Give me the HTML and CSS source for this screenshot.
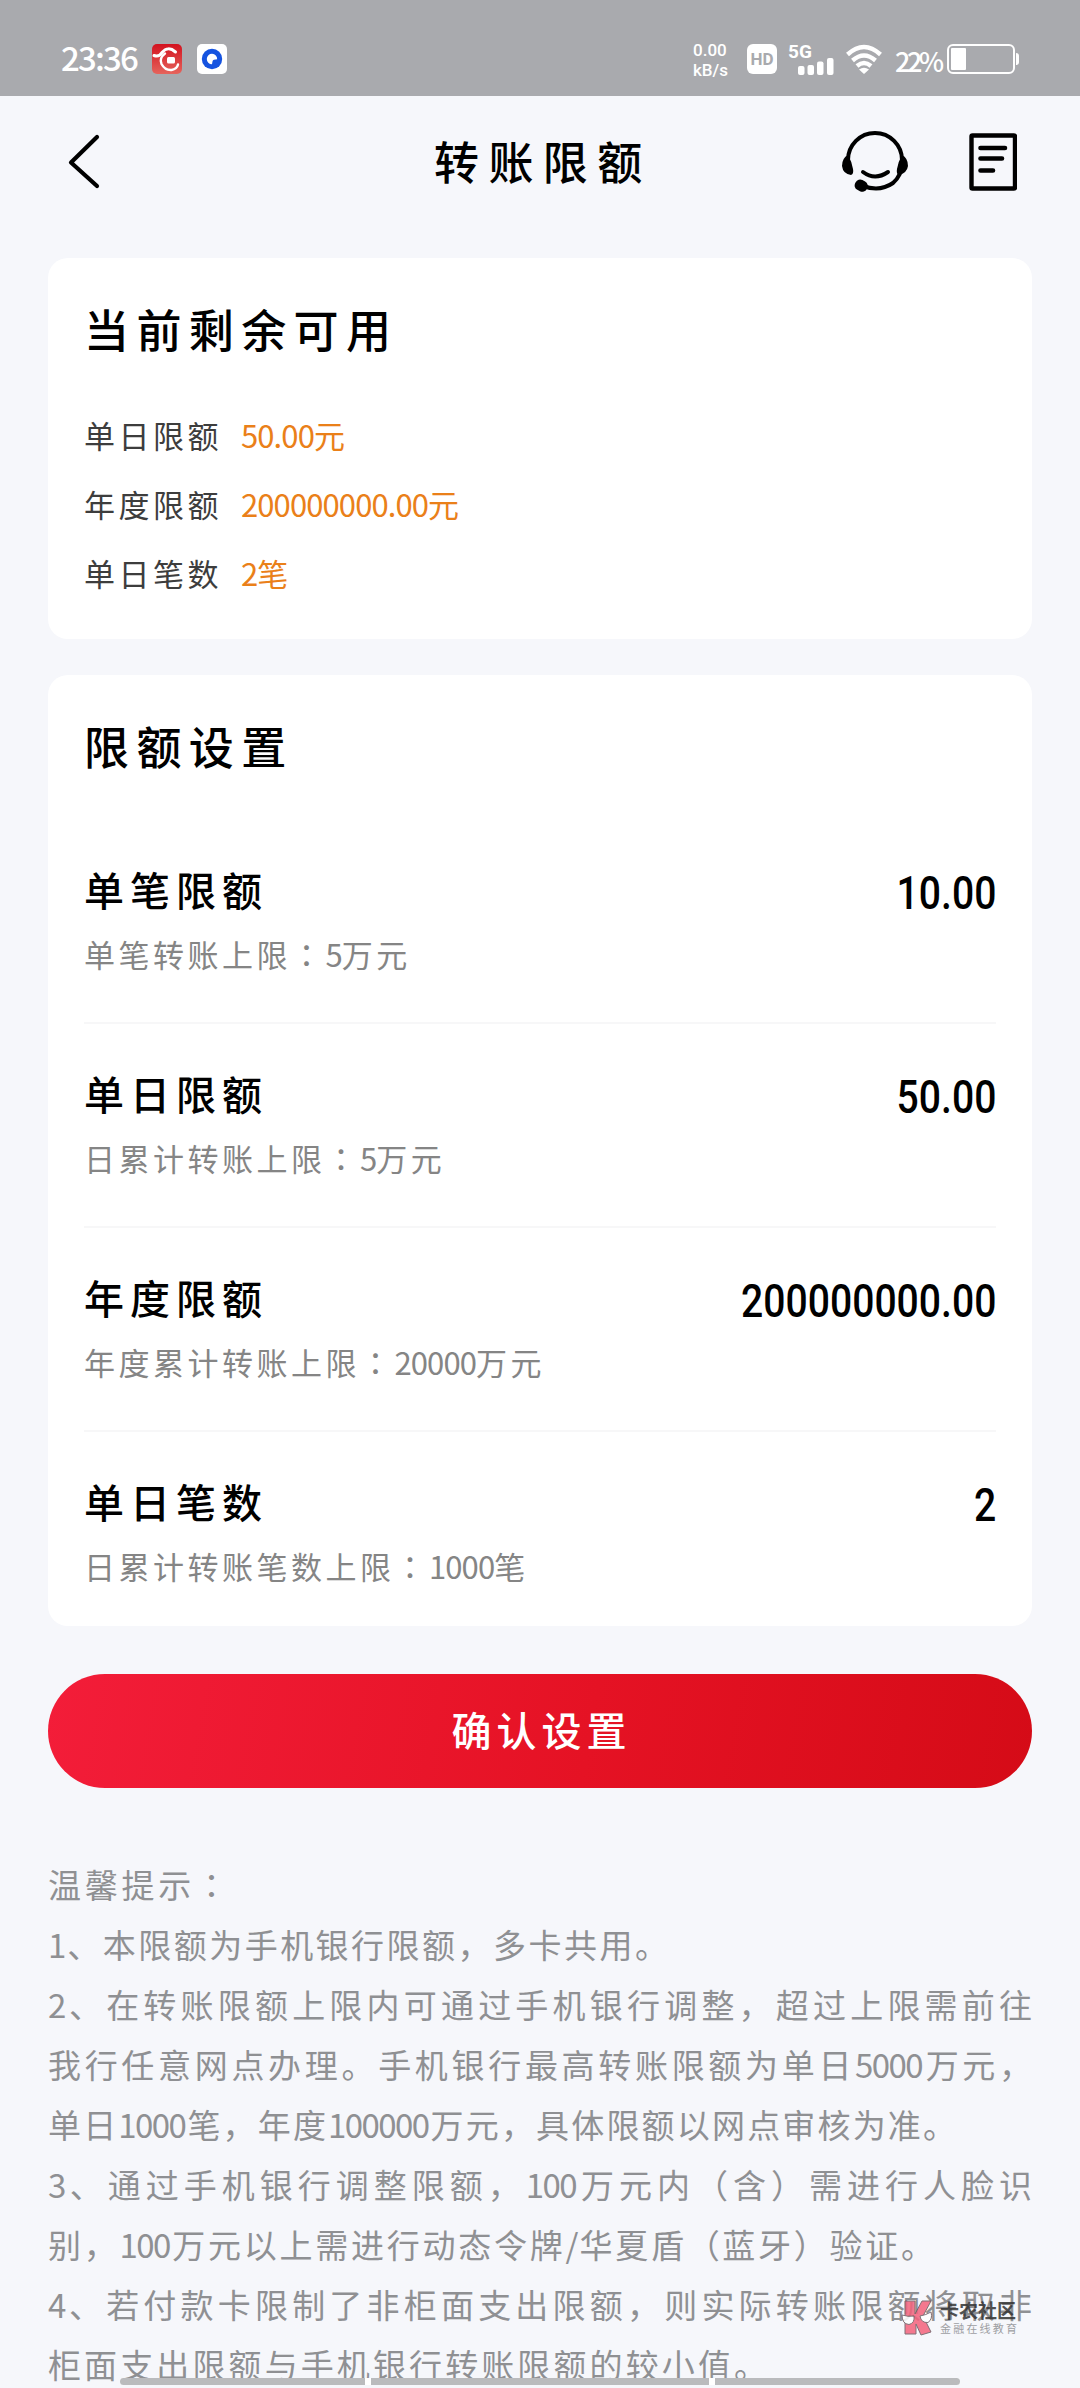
FILE: index.html
```html
<!DOCTYPE html>
<html lang="zh-CN">
<head>
<meta charset="utf-8">
<title>转账限额</title>
<link rel="stylesheet" href="styles.css">
</head>
<body>
<div class="screen">
  <div class="status">
    <span class="time">23:36</span>
    <svg class="app" viewBox="0 0 30 30">
      <defs><linearGradient id="appRed" x1="0" y1="0" x2="0" y2="1"><stop offset="0" stop-color="#d3121f"/><stop offset="1" stop-color="#e5645c"/></linearGradient></defs>
      <rect width="30" height="30" rx="5" fill="url(#appRed)"/>
      <path d="M2 11.500Q7 13.500 10 8.500Q16 1.500 23.500 8" fill="none" stroke="#fff" stroke-width="3" stroke-linecap="round"/>
      <path d="M13 9.500Q7 14 9.500 20Q13 26.500 19.500 26Q25 25 26 20.500" fill="none" stroke="#fff" stroke-width="2.400" stroke-linecap="round"/>
      <rect x="15" y="13" width="8" height="6.500" rx="1.500" fill="#fff"/>
    </svg>
    <svg class="app" viewBox="0 0 30 30">
      <rect width="30" height="30" rx="5" fill="#fff"/>
      <circle cx="15" cy="15" r="10.2" fill="#1553e0"/>
      <path d="M15 20.2A5.2 5.2 0 1 1 20.2 15.2Q16 15.2 15.6 17Z" fill="#fff"/>
    </svg>
    <div class="net"><span>0.00</span><span>kB/s</span></div>
    <div class="hd">HD</div>
    <div class="cell">
      <span>5G</span>
      <svg viewBox="0 0 36 17"><g fill="#fff"><rect x="0" y="8" width="6.5" height="9" rx="2"/><rect x="9.5" y="7" width="6.5" height="10" rx="2"/><rect x="19" y="3.5" width="6.5" height="13.5" rx="2"/><rect x="29" y="0" width="6.5" height="17" rx="2"/></g></svg>
    </div>
    <svg class="wifi" viewBox="0 0 36 30"><g fill="none" stroke="#fff" stroke-width="4.4"><path d="M1.5 10.5Q18-4.500 34.500 10.500"/><path d="M6.500 16.500Q18 6.500 29.500 16.500"/><path d="M11 22Q18 16 25 22"/></g><path d="M13 25.500Q18 22 23 25.500L18 30Z" fill="#fff"/></svg>
    <span class="pct">22%</span>
    <svg class="battery" viewBox="0 0 73 30"><rect x="1" y="1" width="66" height="28" rx="5" fill="none" stroke="#fff" stroke-width="2"/><rect x="4" y="4" width="15" height="22" rx="1" fill="#fff"/><path d="M69 9Q72 9 72 12V18Q72 21 69 21Z" fill="#fff"/></svg>
  </div>

  <header class="nav">
    <svg class="back" viewBox="0 0 34 56"><path d="M30 4L4 29.500L30 53" fill="none" stroke="#000" stroke-width="4.200" stroke-linecap="round" stroke-linejoin="round"/></svg>
    <h1>转账限额</h1>
    <svg class="service" viewBox="0 0 68 62">
      <g fill="none" stroke="#000" stroke-width="4" stroke-linecap="round"><path d="M7 29A27 27 0 0 1 61 29Q62 43 52 52Q39 61 22 55"/><path d="M22 41Q34 50 47 41"/></g>
      <path d="M7 24Q1 27 1 35Q2 43 10 44Q13 43 12 38Q11 31 7 24ZM61 24Q67 27 67 35Q66 42 58 44Q55 43 56 38Q57 31 61 24Z" fill="#000"/>
      <rect x="14" y="49" width="13" height="11" rx="5" transform="rotate(28 20 54)" fill="#000"/>
    </svg>
    <svg class="doc" viewBox="0 0 48 58"><rect x="2.500" y="2.500" width="43.500" height="53" rx="1" fill="none" stroke="#000" stroke-width="4.400"/><path d="M11.500 15H36M11.500 25.500H33M11.500 37.500H24" stroke="#000" stroke-width="4.600" stroke-linecap="round"/></svg>
  </header>

  <section class="card summary">
    <h2>当前剩余可用</h2>
    <div class="line"><span>单日限额</span><b><i>50.00</i>元</b></div>
    <div class="line"><span>年度限额</span><b><i>200000000.00</i>元</b></div>
    <div class="line"><span>单日笔数</span><b><i>2</i>笔</b></div>
  </section>

  <section class="card settings">
    <h2>限额设置</h2>
    <div class="item">
      <div class="top"><h3>单笔限额</h3><span class="amount">10.00</span></div>
      <p>单笔转账上限<em lang="zh-TW">：</em><i>5</i>万元</p>
    </div>
    <div class="item">
      <div class="top"><h3>单日限额</h3><span class="amount">50.00</span></div>
      <p>日累计转账上限<em lang="zh-TW">：</em><i>5</i>万元</p>
    </div>
    <div class="item">
      <div class="top"><h3>年度限额</h3><span class="amount">200000000.00</span></div>
      <p>年度累计转账上限<em lang="zh-TW">：</em><i>20000</i>万元</p>
    </div>
    <div class="item">
      <div class="top"><h3>单日笔数</h3><span class="amount">2</span></div>
      <p>日累计转账笔数上限<em lang="zh-TW">：</em><i>1000</i>笔</p>
    </div>
  </section>

  <button class="confirm">确认设置</button>

  <section class="tips">
    <p class="t1">温馨提示<em lang="zh-TW">：</em></p>
    <p class="t2"><i>1</i>、本限额为手机银行限额，多卡共用。</p>
    <p><i>2</i>、在转账限额上限内可通过手机银行调整，超过上限需前往</p>
    <p>我行任意网点办理。手机银行最高转账限额为单日<i>5000</i>万元，</p>
    <p class="t5">单日<i>1000</i>笔，年度<i>100000</i>万元，具体限额以网点审核为准。</p>
    <p><i>3</i>、通过手机银行调整限额，<i>100</i>万元内（含）需进行人脸识</p>
    <p class="t7">别，<i>100</i>万元以上需进行动态令牌<i>/</i>华夏盾（蓝牙）验证。</p>
    <p><i>4</i>、若付款卡限制了非柜面支出限额，则实际转账限额将取非</p>
    <p class="t9">柜面支出限额与手机银行转账限额的较小值。</p>
  </section>

  <div class="watermark">
    <svg viewBox="0 0 32 36"><g stroke="#6d5960" stroke-width="1"><path d="M4 1H14V14L21 1H30L22 16L30 32L20 35L15 24V34H4Z" fill="#f4637c"/><path d="M1 15Q7 17 13 16Q14 23 8 24.500Q1 24 1 15ZM19 16Q25 15 30 12Q32 19 27 22.500Q20 23 19 16Z" fill="#fff"/></g></svg>
    <div><strong>卡农社区</strong><small>金融在线教育</small></div>
  </div>
  <div class="gesture"><span></span><span></span><span></span></div>
</div>
</body>
</html>
```

FILE: styles.css
```css
* { box-sizing: border-box; margin: 0; padding: 0; }
body {
  background: #f6f7fb;
  font-family: "Noto Sans CJK SC", sans-serif;
  color: #000;
}
i, em { font-style: normal; }
em { font-family: "Noto Sans CJK TC", sans-serif; }
svg { display: block; flex: none; }
.screen {
  position: relative;
  width: 1080px;
  height: 2388px;
  overflow: hidden;
}

.status {
  display: flex;
  height: 96px;
  padding: 44px 60px 0 61px;
  background: #a9aaae;
  color: #fff;
}
.time {
  width: 91px;
  font: 500 33px/27px "Noto Sans CJK SC", sans-serif;
  letter-spacing: -1.800px;
}
.app { width: 30px; height: 30px; margin-right: 15px; }
.net {
  display: flex;
  flex-direction: column;
  width: 37px;
  margin: -4px 17px 0 auto;
  font: 500 17px/20px Roboto, sans-serif;
}
.hd {
  width: 30px;
  height: 30px;
  margin-right: 11px;
  border-radius: 6px;
  background: #fff;
  color: #a9aaae;
  font: 700 17px/31px Roboto, sans-serif;
  text-align: center;
}
.cell { width: 46px; margin-right: 12px; }
.cell span { display: block; height: 14px; font: 700 19px/16px Roboto, sans-serif; }
.cell svg { width: 36px; height: 17px; margin-left: 10px; }
.wifi { width: 36px; height: 30px; margin-right: 13px; }
.pct {
  width: 52px;
  font: 500 27px/33px "Noto Sans CJK SC", sans-serif;
  letter-spacing: -3.500px;
}
.battery { width: 73px; height: 30px; }

.nav {
  display: flex;
  height: 162px;
  padding: 35px 59px 0 67px;
}
.back { width: 34px; height: 56px; margin-top: 2px; }
.nav h1 {
  margin-left: 333px;
  width: 407px;
  font-size: 45px;
  font-weight: 500;
  line-height: 60px;
  letter-spacing: 9.400px;
}
.service { width: 68px; height: 62px; }
.doc { width: 48px; height: 58px; margin: 2px 0 0 60px; }

.card {
  width: 984px;
  margin: 0 auto;
  padding: 41px 36px 0;
  border-radius: 20px;
  background: #fff;
}
.card h2 {
  font-size: 45px;
  font-weight: 500;
  line-height: 60px;
  letter-spacing: 7.400px;
}
.summary { height: 381px; margin-bottom: 36px; }
.summary h2 { margin-bottom: 41px; }
.line {
  display: flex;
  height: 69px;
  color: #3d3d3d;
  font-size: 31px;
  line-height: 69px;
  letter-spacing: 3.500px;
}
.line span { width: 157px; }
.line b { color: #ea8019; font-weight: 400; }
.line i, .item i { letter-spacing: -0.900px; }

.settings { height: 951px; }
.settings h2 { margin-bottom: 44px; }
.item { height: 204px; padding-top: 44px; border-bottom: 2px solid #f7f7f8; }
.item:last-child { height: 190px; border: 0; }
.top { display: flex; justify-content: space-between; height: 50px; }
.item h3 {
  font-size: 40px;
  font-weight: 500;
  line-height: 50px;
  letter-spacing: 6px;
}
.item p {
  margin-top: 20px;
  color: #858585;
  font-size: 31px;
  line-height: 40px;
  letter-spacing: 3.500px;
}
.amount {
  font: 500 46px/59px Roboto, sans-serif;
  transform: scaleX(0.85);
  transform-origin: right;
}

.confirm {
  display: block;
  width: 984px;
  height: 114px;
  margin: 48px auto 66px;
  padding: 0 0 4px 3px;
  border: 0;
  border-radius: 57px;
  background: linear-gradient(100deg, #f31d39, #e51224 55%, #d50b17);
  color: #fff;
  font: 500 40px/110px "Noto Sans CJK SC", sans-serif;
  letter-spacing: 5px;
}

.tips { width: 984px; margin: 0 auto; color: #8f9093; font-size: 33px; }
.tips p {
  height: 60px;
  line-height: 60px;
  white-space: nowrap;
  text-align: justify;
  text-align-last: justify;
}
.tips i { letter-spacing: -1.600px; }
.tips .t1 { width: 180px; }
.tips .t2 { width: 620px; }
.tips .t5 { width: 908px; }
.tips .t7 { width: 886px; }
.tips .t9 { width: 719px; }

.watermark {
  position: absolute;
  left: 901px;
  top: 2300px;
  display: flex;
  gap: 7px;
  opacity: 0.85;
}
.watermark svg { width: 32px; height: 36px; }
.watermark strong, .watermark small { display: block; white-space: nowrap; }
.watermark strong { color: #333; font-size: 19px; font-weight: 700; line-height: 20px; }
.watermark small { color: #8f9093; font-size: 11px; line-height: 16px; letter-spacing: 2.200px; }

.gesture {
  position: absolute;
  left: 120px;
  top: 2378px;
  display: flex;
  gap: 6px;
  width: 840px;
  height: 7px;
  border-radius: 4px;
  background: #fff;
  overflow: hidden;
}
.gesture span { flex: 245 0 0; background: #babbbd; }
.gesture span:nth-child(2) { flex-grow: 338; }
```
